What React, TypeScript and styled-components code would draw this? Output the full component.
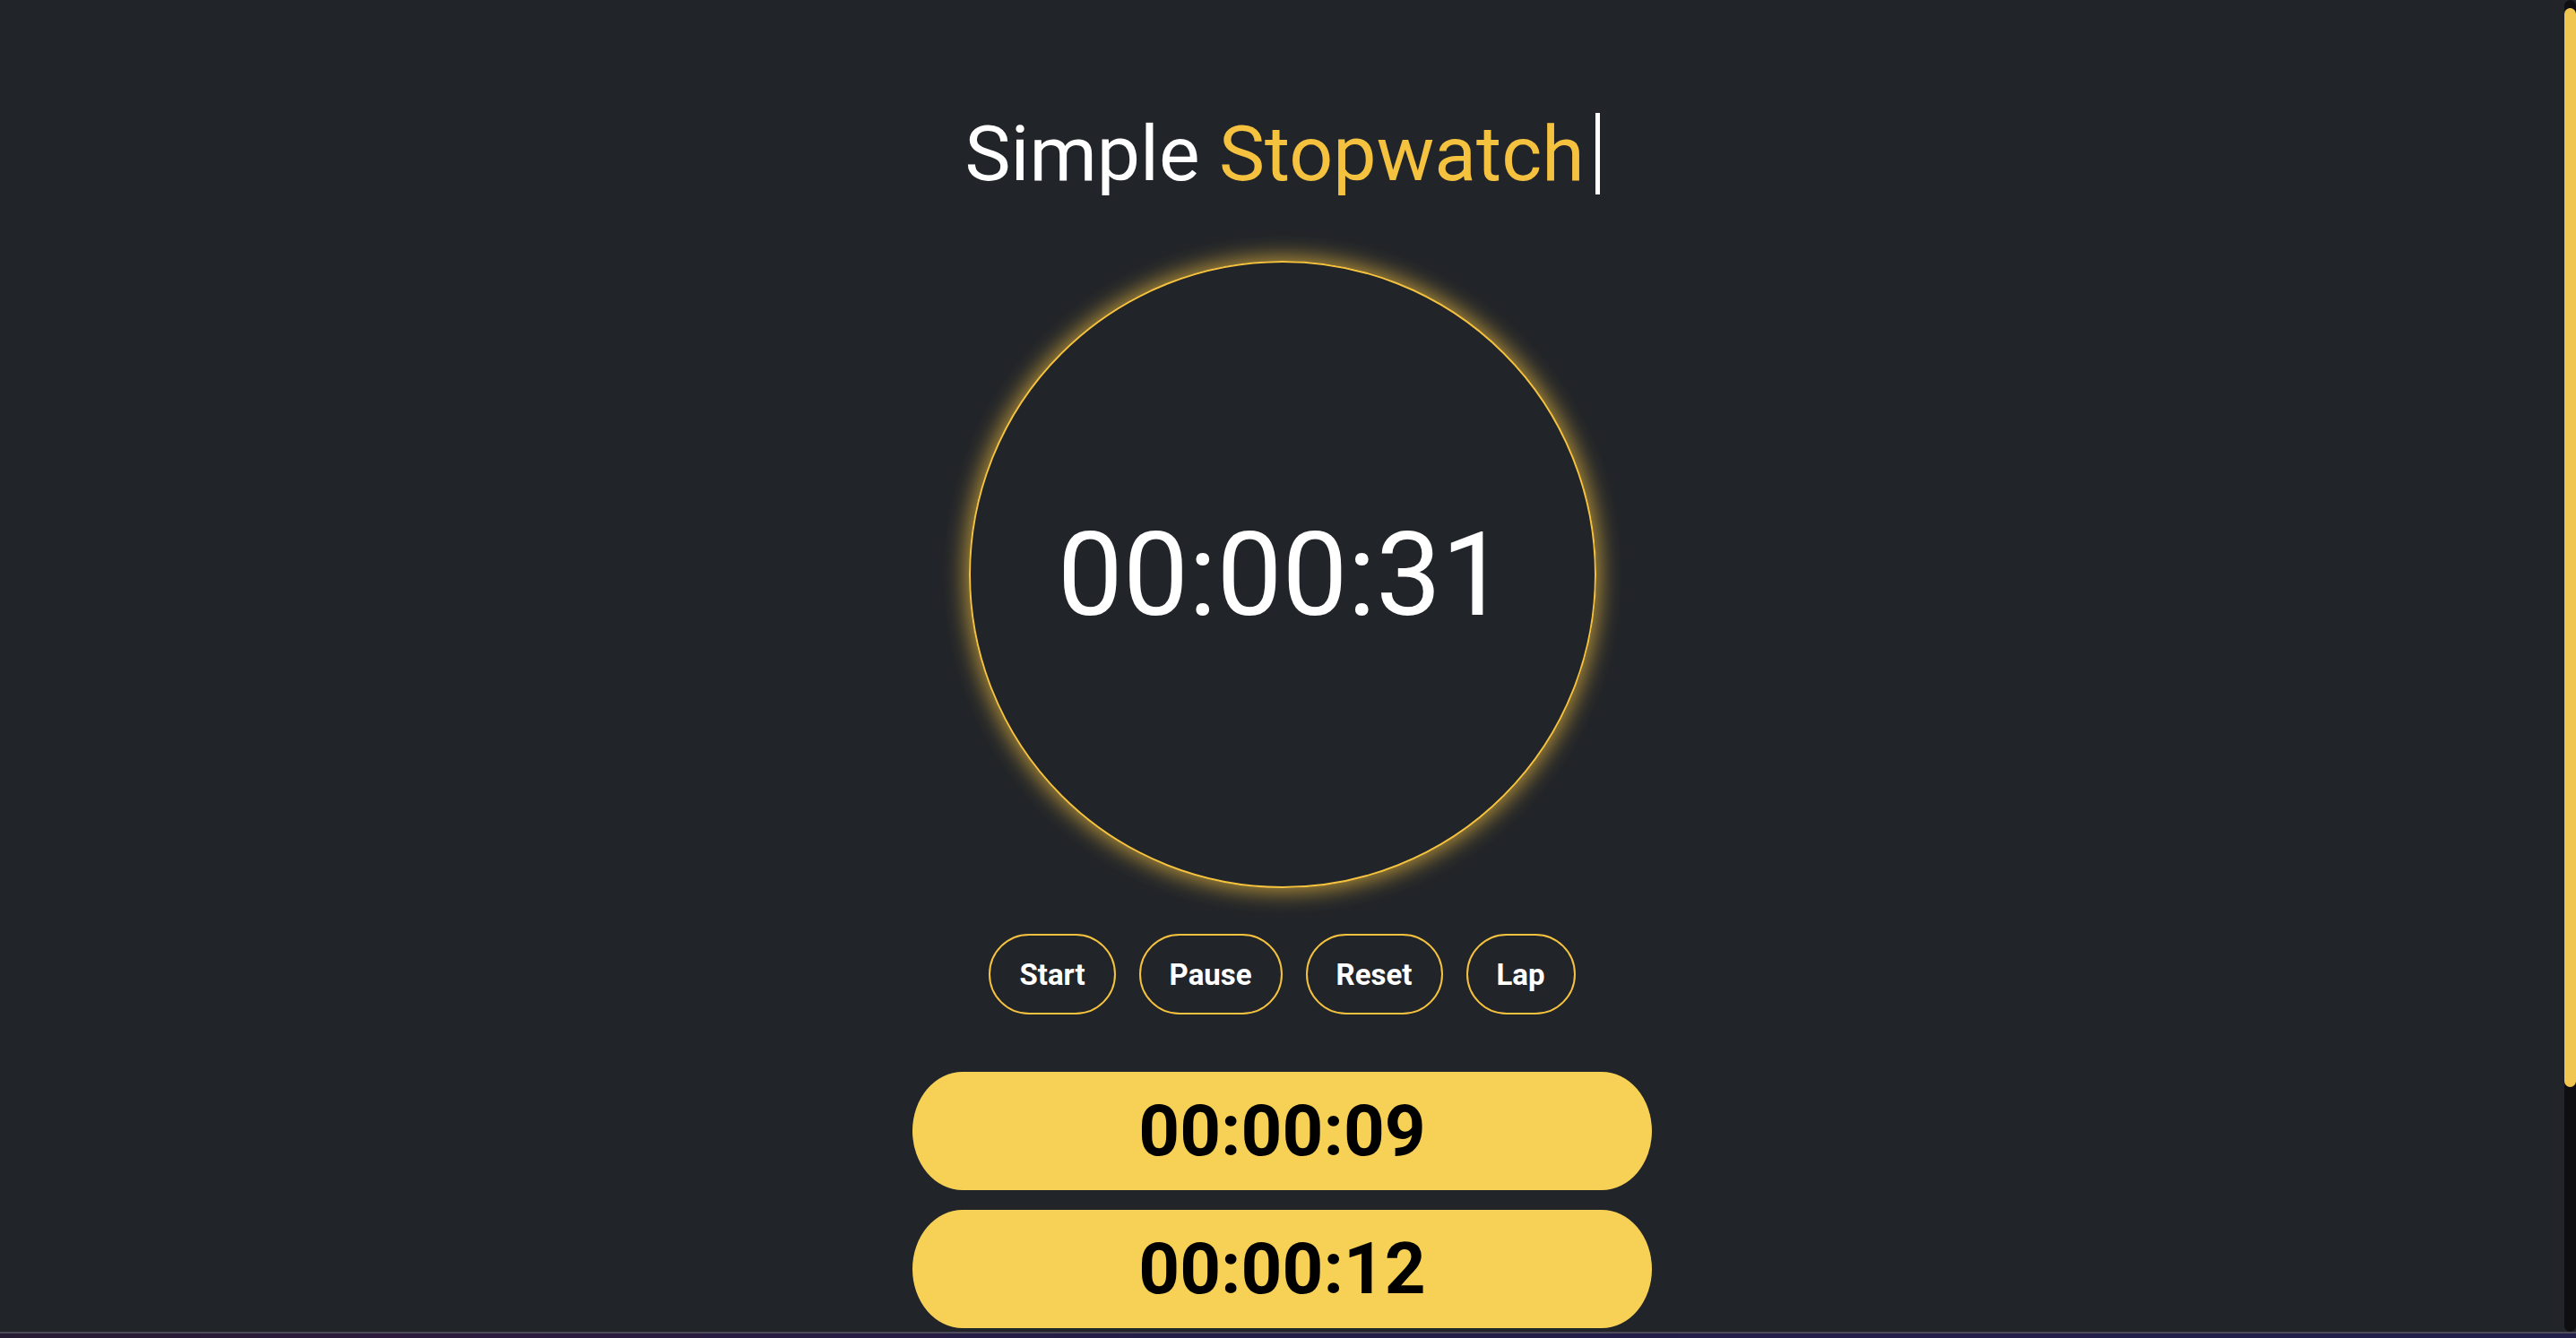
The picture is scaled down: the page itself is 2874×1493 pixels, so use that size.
import React, { FC } from "react"
import styled, { createGlobalStyle } from "styled-components"

const COLORS = {
  bg: "#212429",
  accent: "#f5c23f",
  lap: "#f7d156",
  white: "#ffffff",
  track: "#0f0f11",
  thumb: "#f0c650",
}

const GlobalStyle = createGlobalStyle`
  html, body {
    margin: 0;
    padding: 0;
    height: 100%;
    overflow: hidden;
    background: ${COLORS.bg};
  }

  #root {
    height: 100%;
  }

  * {
    box-sizing: border-box;
  }
`

const Frame = styled.div`
  height: 100vh;
  display: flex;
  flex-flow: column;
`

const Viewport = styled.div`
  flex: 1;
  min-height: 0;
  display: flex;
`

const Scroller = styled.main`
  flex: 1;
  overflow-y: auto;
  scrollbar-width: none;
  background: ${COLORS.bg};
  font-family: Roboto, "Liberation Sans", sans-serif;
`

// the page's custom scrollbar, drawn since the headless shot hides native ones
const ScrollRail = styled.div`
  width: 13px;
  flex-shrink: 0;
  display: flex;
  flex-flow: column;
  background: ${COLORS.track};
  border-radius: 7px;
  padding-top: 9px;
`

const ScrollThumb = styled.div<{ $ratio: number }>`
  height: ${p => p.$ratio * 100}%;
  background: ${COLORS.thumb};
  border-radius: 7px;
`

const TaskbarEdge = styled.div`
  height: 7px;
  flex-shrink: 0;
  border-top: 2px solid #4d4b5a;
  background: linear-gradient(90deg, #261c33 0%, #2d1a3c 15%, #231e48 45%, #221f4b 100%);
`

const Page = styled.div`
  display: flex;
  flex-flow: column;
  align-items: center;
  padding: 126px 0 52px;
`

const Title = styled.h1`
  margin: 0;
  font-size: 86px;
  font-weight: 400;
  line-height: 91px;
  color: ${COLORS.white};
  padding-right: 12px;
  border-right: 5px solid ${COLORS.white};
  white-space: nowrap;
`

const Highlight = styled.span`
  color: ${COLORS.accent};
`

const Dial = styled.div`
  margin-top: 74px;
  width: 700px;
  height: 700px;
  border-radius: 50%;
  border: 2px solid ${COLORS.accent};
  box-shadow: 0 0 26px 3px rgba(245, 194, 63, 0.75);
  display: flex;
  align-items: center;
  justify-content: center;
`

const Time = styled.span`
  font-size: 130px;
  font-weight: 400;
  color: ${COLORS.white};
`

const Controls = styled.div`
  margin-top: 51px;
  display: flex;
  gap: 26px;
`

const ControlButton = styled.button`
  height: 90px;
  padding: 0 32px;
  border: 2px solid ${COLORS.accent};
  border-radius: 45px;
  background: transparent;
  color: ${COLORS.white};
  font-family: Roboto, "Liberation Sans", sans-serif;
  font-size: 33px;
  font-weight: 700;
  cursor: pointer;
`

const Laps = styled.ol`
  list-style: none;
  margin: 64px 0 0;
  padding: 0;
  display: flex;
  flex-flow: column;
  gap: 22px;
`

const LapItem = styled.li`
  width: 825px;
  height: 132px;
  border-radius: 56px / 66px;
  background: ${COLORS.lap};
  display: flex;
  align-items: center;
  justify-content: center;
  font-size: 80px;
  font-weight: 700;
  color: #000;
`

const CONTROLS = ["Start", "Pause", "Reset", "Lap"]
const LAPS = ["00:00:09", "00:00:12", "00:00:20", "00:00:27"]

const App: FC = () => {
  return (
    <>
      <GlobalStyle />
      <Frame>
        <Viewport>
          <Scroller>
            <Page>
              <Title>
                Simple <Highlight>Stopwatch</Highlight>
              </Title>

              <Dial>
                <Time>00:00:31</Time>
              </Dial>

              <Controls>
                {CONTROLS.map(label => (
                  <ControlButton key={label}>{label}</ControlButton>
                ))}
              </Controls>

              <Laps>
                {LAPS.map(lap => (
                  <LapItem key={lap}>{lap}</LapItem>
                ))}
              </Laps>
            </Page>
          </Scroller>
          <ScrollRail>
            <ScrollThumb $ratio={0.815} />
          </ScrollRail>
        </Viewport>
        <TaskbarEdge />
      </Frame>
    </>
  )
}

export default App
